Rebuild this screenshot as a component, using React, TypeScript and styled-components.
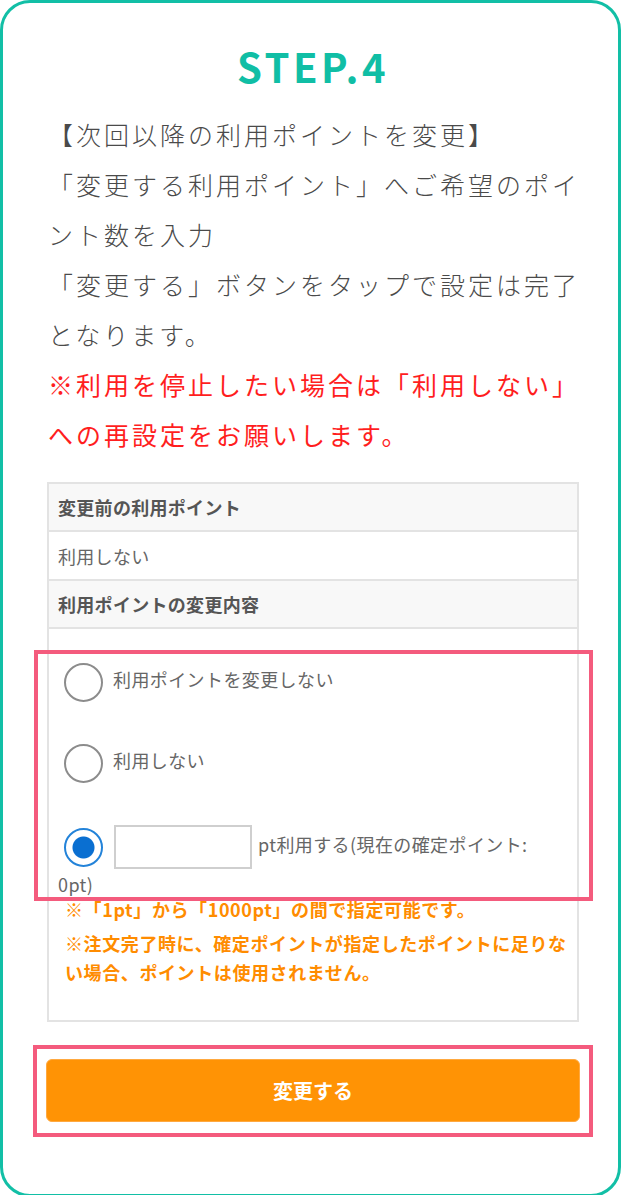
import styled, { createGlobalStyle } from 'styled-components'

const GlobalStyle = createGlobalStyle`
  body {
    margin: 0;
    background: #fff;
    font-family: "Noto Sans CJK JP", "Noto Sans", sans-serif;
  }
`;

type RadioProps = { $checked?: boolean };

const options = ['利用ポイントを変更しない', '利用しない'];

export default function App() {
  return (
    <>
      <GlobalStyle />
      <StyledCard>
        <StyledStepTitle>STEP.4</StyledStepTitle>
        <StyledLead>
          【次回以降の利用ポイントを変更】<br />
          「変更する利用ポイント」へご希望のポイ<br />
          ント数を入力<br />
          「変更する」ボタンをタップで設定は完了<br />
          となります。<br />
          <StyledAlert>
            ※利用を停止したい場合は「利用しない」<br />
            への再設定をお願いします。
          </StyledAlert>
        </StyledLead>

        <StyledTable>
          <StyledHeadCell>変更前の利用ポイント</StyledHeadCell>
          <StyledCell>利用しない</StyledCell>
          <StyledHeadCell>利用ポイントの変更内容</StyledHeadCell>
          <StyledOptionCell>
            {options.map((label) => (
              <StyledOption key={label}>
                <StyledRadio />
                {label}
              </StyledOption>
            ))}
            <StyledOption>
              <StyledRadio $checked />
              <StyledPointInput type="text" />
              pt利用する(現在の確定ポイント:<br />0pt)
            </StyledOption>
            <StyledNote>※「1pt」から「1000pt」の間で指定可能です。</StyledNote>
            <StyledNote $gap>
              ※注文完了時に、確定ポイントが指定したポイントに足りな<br />
              い場合、ポイントは使用されません。
            </StyledNote>
            <StyledHighlight $top={21} $height={251} />
          </StyledOptionCell>
        </StyledTable>

        <StyledButtonArea>
          <StyledSubmit type="button">変更する</StyledSubmit>
          <StyledHighlight $top={-14} $height={92} />
        </StyledButtonArea>
      </StyledCard>
    </>
  )
}

const StyledCard = styled.section`
  position: relative;
  width: 621px;
  box-sizing: border-box;
  border: 3px solid #12bfa6;
  border-radius: 30px;
  padding: 38px 38px 72px 43px;
`;

const StyledStepTitle = styled.h2`
  margin: 0;
  text-align: center;
  font-size: 40px;
  line-height: 50px;
  font-weight: 700;
  letter-spacing: 3.5px;
  color: #10bea5;
`;

const StyledLead = styled.p`
  margin: 18px 0 0;
  padding-left: 2px;
  font-size: 25px;
  line-height: 50px;
  font-weight: 300;
  letter-spacing: 3px;
  color: #4a4a4a;
  white-space: nowrap;
`;

const StyledAlert = styled.span`
  color: #ff1e1e;
  font-weight: 400;
`;

const StyledTable = styled.div`
  margin: 23px 1px 0;
  border: 2px solid #e3e3e3;
  color: #666;
`;

const StyledCell = styled.div`
  display: flex;
  align-items: center;
  height: 47px;
  padding: 0 9px;
  border-bottom: 2px solid #e3e3e3;
  font-size: 18px;
  letter-spacing: 0.3px;
`;

const StyledHeadCell = styled(StyledCell)`
  height: 46px;
  background: #f8f8f8;
  font-weight: 700;
  color: #555;
`;

const StyledOptionCell = styled.div`
  position: relative;
  padding: 34px 9px 33px;
`;

const StyledOption = styled.div`
  font-size: 18px;
  line-height: 30px;
  letter-spacing: 0.4px;
  color: #666;
  margin-bottom: 42px;

  &:nth-of-type(3) {
    margin-bottom: 0;
  }
`;

const StyledRadio = styled.span<RadioProps>`
  display: inline-block;
  width: 39px;
  height: 39px;
  box-sizing: border-box;
  border-radius: 50%;
  margin: 0 10px 0 6px;
  vertical-align: middle;
  border: 2px solid ${(p) => (p.$checked ? '#2383d9' : '#8c8c8c')};
  background: ${(p) =>
    p.$checked
      ? 'radial-gradient(circle, #0a6fd1 0 10.5px, #fff 11.5px)'
      : '#fff'};
`;

const StyledPointInput = styled.input`
  width: 138px;
  height: 44px;
  box-sizing: border-box;
  margin: 0 6px 0 1px;
  padding: 0 8px;
  border: 2px solid #cfcfcf;
  border-radius: 0;
  vertical-align: middle;
  font-size: 18px;
  outline: none;
`;

const StyledNote = styled.p<{ $gap?: boolean }>`
  margin: ${(p) => (p.$gap ? '5px' : '-4px')} 0 0;
  padding-left: 7px;
  font-size: 18px;
  line-height: 29px;
  letter-spacing: 0.6px;
  font-weight: 700;
  color: #ff8c00;
  white-space: nowrap;
`;

const StyledHighlight = styled.div<{ $top: number; $height: number }>`
  position: absolute;
  top: ${(p) => p.$top}px;
  left: -15px;
  right: -16px;
  height: ${(p) => p.$height}px;
  box-sizing: border-box;
  border: 4px solid #f45b7d;
  pointer-events: none;
`;

const StyledButtonArea = styled.div`
  position: relative;
  margin-top: 37px;

  ${StyledHighlight} {
    left: -13px;
    right: -13px;
  }
`;

const StyledSubmit = styled.button`
  display: block;
  width: 100%;
  height: 63px;
  border: 1px solid #ffa940;
  border-radius: 6px;
  background: #ff9305;
  color: #fff;
  font-family: inherit;
  font-size: 20px;
  font-weight: 700;
  cursor: pointer;
`;
